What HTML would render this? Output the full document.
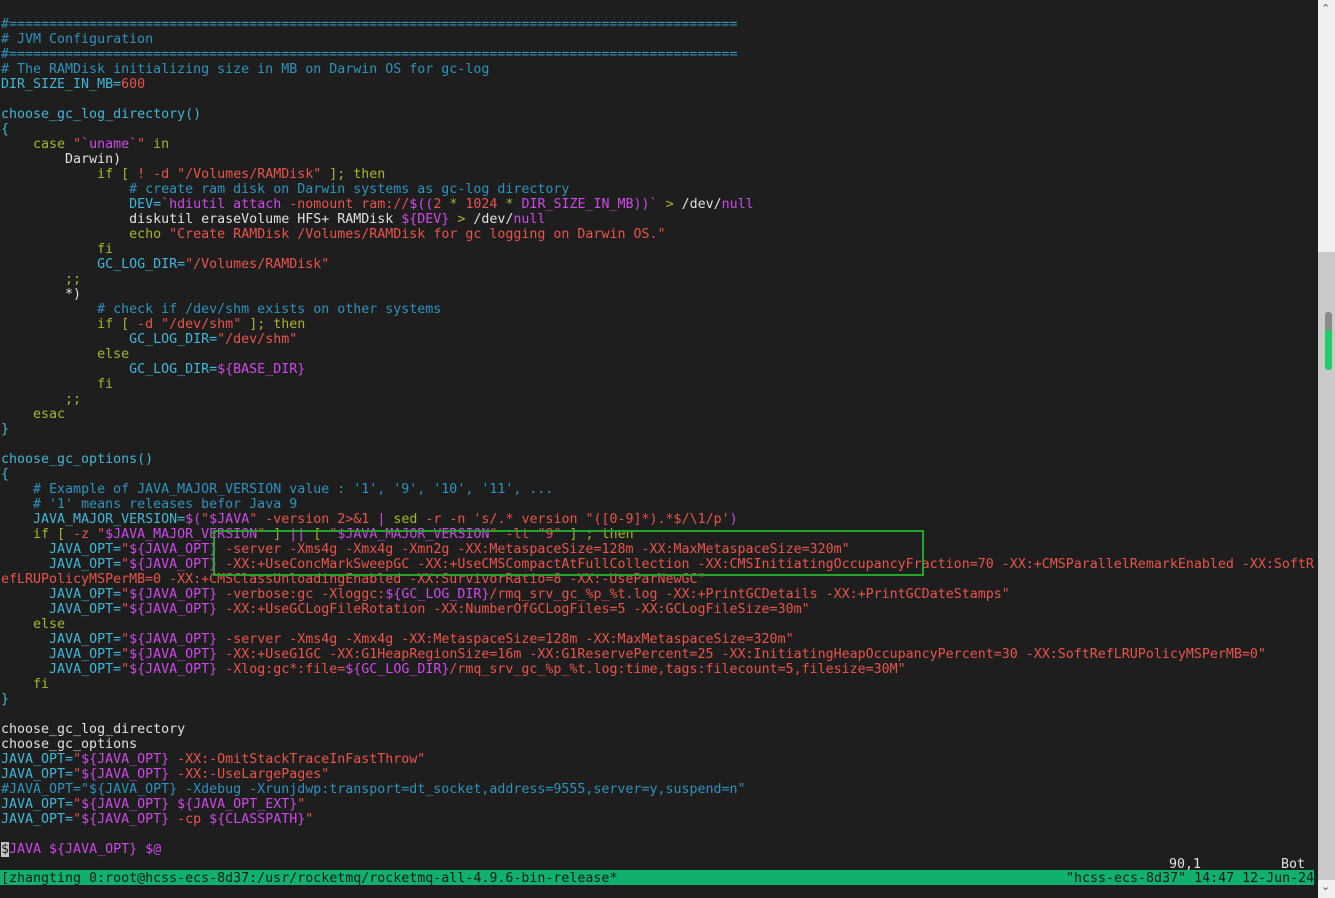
<!DOCTYPE html>
<html><head><meta charset="utf-8"><style>
html,body{margin:0;padding:0;background:#1e1e1e;width:1335px;height:898px;overflow:hidden}
pre{position:absolute;left:1px;top:2px;margin:0;font-family:"DejaVu Sans Mono","Liberation Mono",monospace;font-size:13.3px;line-height:15px;color:#dcdcdc;white-space:pre}
.c{color:#2e92bc}.v{color:#42b6d6}.k{color:#a9b32c}.s{color:#e8544c}.m{color:#cc4ae6}.w{color:#e0e0e0}
.cur{background:#c8c8c8;color:#1e1e1e}
.t{position:absolute;font-family:"DejaVu Sans Mono","Liberation Mono",monospace;font-size:13.3px;line-height:15px;white-space:pre}
#st{position:absolute;left:0;top:870px;width:1314px;height:15px;background:#10b06e}
#box{position:absolute;left:213px;top:530px;width:707px;height:42px;border:2px solid #22a52a}
#sb{position:absolute;left:1318px;top:0;width:17px;height:898px;background:#f0f0f0}
#sbt{position:absolute;left:1318px;top:252px;width:17px;height:628px;background:#c9c9c9}
#th1{position:absolute;left:1325px;top:312px;width:7px;height:18px;background:#8a8a8a;border-radius:3px 3px 0 0}
#th2{position:absolute;left:1325px;top:330px;width:7px;height:40px;background:#22cc6a;border-radius:0 0 3px 3px}
.ar{position:absolute;left:1321px;font:11px "DejaVu Sans",sans-serif;color:#555}
</style></head><body>
<div id="st"></div>
<pre>

<span class="c">#===========================================================================================</span>
<span class="c"># JVM Configuration</span>
<span class="c">#===========================================================================================</span>
<span class="c"># The RAMDisk initializing size in MB on Darwin OS for gc-log</span>
<span class="v">DIR_SIZE_IN_MB=</span><span class="s">600</span>

<span class="v">choose_gc_log_directory()</span>
<span class="v">{</span>
    <span class="k">case</span> <span class="s">"</span><span class="m">`uname`</span><span class="s">"</span> <span class="k">in</span>
        <span class="w">Darwin)</span>
            <span class="k">if [</span> <span class="s">! -d "/Volumes/RAMDisk"</span> <span class="k">]; then</span>
                <span class="c"># create ram disk on Darwin systems as gc-log directory</span>
                <span class="v">DEV=</span><span class="m">`hdiutil attach </span><span class="s">-nomount ram://</span><span class="m">$((</span><span class="s">2 </span><span class="k">*</span><span class="s"> 1024 </span><span class="k">*</span><span class="m"> DIR_SIZE_IN_MB))`</span> <span class="k">&gt;</span><span class="w"> /dev/</span><span class="m">null</span>
                <span class="w">diskutil eraseVolume HFS+ RAMDisk </span><span class="m">${DEV}</span> <span class="k">&gt;</span><span class="w"> /dev/</span><span class="m">null</span>
                <span class="k">echo</span> <span class="s">"Create RAMDisk /Volumes/RAMDisk for gc logging on Darwin OS."</span>
            <span class="k">fi</span>
            <span class="v">GC_LOG_DIR=</span><span class="s">"/Volumes/RAMDisk"</span>
        <span class="k">;;</span>
        <span class="w">*)</span>
            <span class="c"># check if /dev/shm exists on other systems</span>
            <span class="k">if [</span> <span class="s">-d "/dev/shm"</span> <span class="k">]; then</span>
                <span class="v">GC_LOG_DIR=</span><span class="s">"/dev/shm"</span>
            <span class="k">else</span>
                <span class="v">GC_LOG_DIR=</span><span class="m">${BASE_DIR}</span>
            <span class="k">fi</span>
        <span class="k">;;</span>
    <span class="k">esac</span>
<span class="v">}</span>

<span class="v">choose_gc_options()</span>
<span class="v">{</span>
    <span class="c"># Example of JAVA_MAJOR_VERSION value : '1', '9', '10', '11', ...</span>
    <span class="c"># '1' means releases befor Java 9</span>
    <span class="v">JAVA_MAJOR_VERSION=</span><span class="m">$(</span><span class="s">"</span><span class="m">$JAVA</span><span class="s">" -version 2&gt;&amp;1</span> <span class="m">|</span> <span class="k">sed</span> <span class="s">-r -n 's/.* version "([0-9]*).*$/\1/p'</span><span class="m">)</span>
    <span class="k">if [</span> <span class="s">-z "</span><span class="m">$JAVA_MAJOR_VERSION</span><span class="s">"</span> <span class="k">]</span> <span class="m">||</span> <span class="k">[</span> <span class="s">"</span><span class="m">$JAVA_MAJOR_VERSION</span><span class="s">" -lt "9"</span> <span class="k">] ; then</span>
      <span class="v">JAVA_OPT=</span><span class="s">"</span><span class="m">${JAVA_OPT}</span><span class="s"> -server -Xms4g -Xmx4g -Xmn2g -XX:MetaspaceSize=128m -XX:MaxMetaspaceSize=320m"</span>
      <span class="v">JAVA_OPT=</span><span class="s">"</span><span class="m">${JAVA_OPT}</span><span class="s"> -XX:+UseConcMarkSweepGC -XX:+UseCMSCompactAtFullCollection -XX:CMSInitiatingOccupancyFraction=70 -XX:+CMSParallelRemarkEnabled -XX:SoftR</span>
<span class="s">efLRUPolicyMSPerMB=0 -XX:+CMSClassUnloadingEnabled -XX:SurvivorRatio=8 -XX:-UseParNewGC"</span>
      <span class="v">JAVA_OPT=</span><span class="s">"</span><span class="m">${JAVA_OPT}</span><span class="s"> -verbose:gc -Xloggc:</span><span class="m">${GC_LOG_DIR}</span><span class="s">/rmq_srv_gc_%p_%t.log -XX:+PrintGCDetails -XX:+PrintGCDateStamps"</span>
      <span class="v">JAVA_OPT=</span><span class="s">"</span><span class="m">${JAVA_OPT}</span><span class="s"> -XX:+UseGCLogFileRotation -XX:NumberOfGCLogFiles=5 -XX:GCLogFileSize=30m"</span>
    <span class="k">else</span>
      <span class="v">JAVA_OPT=</span><span class="s">"</span><span class="m">${JAVA_OPT}</span><span class="s"> -server -Xms4g -Xmx4g -XX:MetaspaceSize=128m -XX:MaxMetaspaceSize=320m"</span>
      <span class="v">JAVA_OPT=</span><span class="s">"</span><span class="m">${JAVA_OPT}</span><span class="s"> -XX:+UseG1GC -XX:G1HeapRegionSize=16m -XX:G1ReservePercent=25 -XX:InitiatingHeapOccupancyPercent=30 -XX:SoftRefLRUPolicyMSPerMB=0"</span>
      <span class="v">JAVA_OPT=</span><span class="s">"</span><span class="m">${JAVA_OPT}</span><span class="s"> -Xlog:gc*:file=</span><span class="m">${GC_LOG_DIR}</span><span class="s">/rmq_srv_gc_%p_%t.log:time,tags:filecount=5,filesize=30M"</span>
    <span class="k">fi</span>
<span class="v">}</span>

<span class="w">choose_gc_log_directory</span>
<span class="w">choose_gc_options</span>
<span class="v">JAVA_OPT=</span><span class="s">"</span><span class="m">${JAVA_OPT}</span><span class="s"> -XX:-OmitStackTraceInFastThrow"</span>
<span class="v">JAVA_OPT=</span><span class="s">"</span><span class="m">${JAVA_OPT}</span><span class="s"> -XX:-UseLargePages"</span>
<span class="c">#JAVA_OPT="${JAVA_OPT} -Xdebug -Xrunjdwp:transport=dt_socket,address=9555,server=y,suspend=n"</span>
<span class="v">JAVA_OPT=</span><span class="s">"</span><span class="m">${JAVA_OPT} ${JAVA_OPT_EXT}</span><span class="s">"</span>
<span class="v">JAVA_OPT=</span><span class="s">"</span><span class="m">${JAVA_OPT}</span><span class="s"> -cp </span><span class="m">${CLASSPATH}</span><span class="s">"</span>

<span class="cur">$</span><span class="m">JAVA ${JAVA_OPT} $@</span>
</pre>
<div class="t" style="left:1169px;top:857px;color:#e0e0e0">90,1</div>
<div class="t" style="left:1281px;top:857px;color:#e0e0e0">Bot</div>
<div class="t" style="left:1px;top:871px;color:#1a1a1a">[zhangting 0:root@hcss-ecs-8d37:/usr/rocketmq/rocketmq-all-4.9.6-bin-release*</div>
<div class="t" style="left:1066px;top:871px;color:#1a1a1a">"hcss-ecs-8d37" 14:47 12-Jun-24</div>
<div id="box"></div>
<div id="sb"></div><div id="sbt"></div>
<div style="position:absolute;left:1318px;top:880px;width:17px;height:18px;background:#f0f0f0"></div>
<div class="ar" style="top:2px">&#8963;</div>
<div class="ar" style="top:880px">&#8964;</div>
<div id="th1"></div><div id="th2"></div>
</body></html>
